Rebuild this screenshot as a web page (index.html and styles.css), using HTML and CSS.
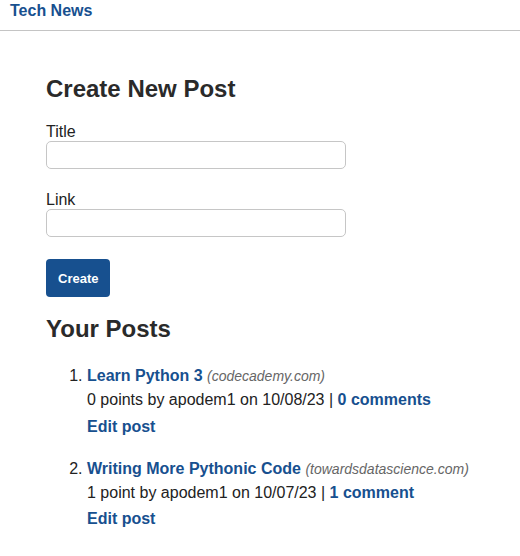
FILE: index.html
```html
<!DOCTYPE html>
<html lang="en">
<head>
<meta charset="utf-8">
<title>Tech News</title>
<link rel="stylesheet" href="styles.css">
</head>
<body>
<header class="site-header">
  <a class="brand" href="#">Tech News</a>
</header>
<main class="content">
  <h1 class="page-title">Create New Post</h1>
  <form class="post-form">
    <div class="field">
      <label class="field-label" for="title">Title</label>
      <input class="field-input" id="title" type="text">
    </div>
    <div class="field">
      <label class="field-label" for="link">Link</label>
      <input class="field-input" id="link" type="text">
    </div>
    <button class="btn" type="button">Create</button>
  </form>
  <h2 class="page-title section-title">Your Posts</h2>
  <ol class="post-list">
    <li class="post">
      <div class="post-line"><a class="link strong" href="#">Learn Python 3</a> <span class="domain">(codecademy.com)</span></div>
      <div class="post-line meta">0 points by apodem1 on 10/08/23 | <a class="link strong" href="#">0 comments</a></div>
      <div class="post-edit"><a class="link strong" href="#">Edit post</a></div>
    </li>
    <li class="post">
      <div class="post-line"><a class="link strong" href="#">Writing More Pythonic Code</a> <span class="domain">(towardsdatascience.com)</span></div>
      <div class="post-line meta">1 point by apodem1 on 10/07/23 | <a class="link strong" href="#">1 comment</a></div>
      <div class="post-edit"><a class="link strong" href="#">Edit post</a></div>
    </li>
  </ol>
</main>
</body>
</html>
```
FILE: styles.css
```css
* { box-sizing: border-box; }

body {
  margin: 0;
  font-family: "Liberation Sans", Arial, Helvetica, sans-serif;
  color: #222;
  background: #fff;
}

.site-header {
  height: 31px;
  padding: 2px 10px 0;
  border-bottom: 1px solid #c4c4c4;
}

.brand {
  font-size: 16px;
  font-weight: bold;
  color: #17508f;
  text-decoration: none;
  line-height: 18px;
}

.content {
  padding: 44px 46px 0;
}

.page-title {
  margin: 0 0 19px;
  font-size: 24px;
  font-weight: bold;
  line-height: 28px;
  color: #2a2a2a;
}

.field {
  display: flex;
  flex-direction: column;
  margin-bottom: 21px;
}

.field-label {
  font-size: 16px;
  line-height: 19px;
}

.field-input {
  width: 300px;
  height: 28px;
  border: 1px solid #c6c6c6;
  border-radius: 5px;
  font-size: 14px;
  padding: 0 6px;
  background: #fff;
}

.btn {
  margin-top: 1px;
  height: 38px;
  padding: 0 12px;
  border: none;
  border-radius: 4px;
  background: #17508f;
  color: #fff;
  font-family: inherit;
  font-size: 13px;
  font-weight: bold;
}

.section-title {
  margin-top: 18px;
  margin-bottom: 21px;
}

.post-list {
  margin: 0;
  padding-left: 41px;
  font-size: 16px;
}

.post {
  margin-bottom: 19px;
  line-height: 23px;
}

.post-edit {
  margin-top: 4px;
}

.post:last-child .post-edit {
  margin-top: 3px;
}

.link {
  color: #17508f;
  text-decoration: none;
}

.strong { font-weight: bold; }

.domain {
  font-size: 14px;
  font-style: italic;
  color: #666;
}

.meta { color: #222; }
```
